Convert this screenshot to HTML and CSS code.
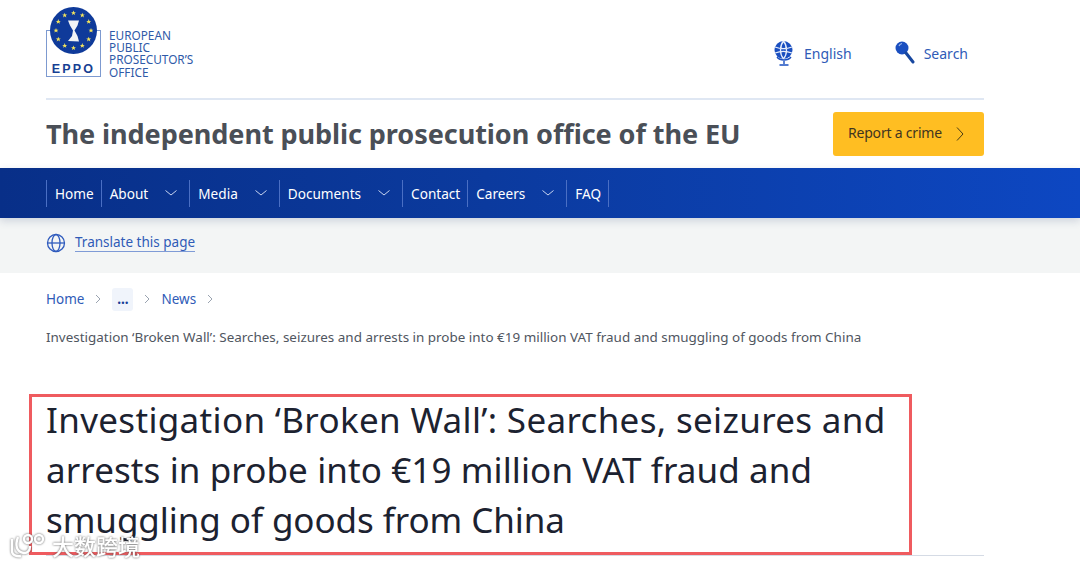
FILE: index.html
```html
<!DOCTYPE html>
<html lang="en">
<head>
<meta charset="utf-8">
<title>EPPO</title>
<link rel="stylesheet" href="styles.css">
</head>
<body>
<div class="container">
  <div class="top-row">
    <div class="logo">
      <svg class="logo-mark" width="56" height="78" viewBox="0 0 56 78">
        <defs><path id="star" d="M0-2.600.7-.8 2.500-.8 1.100.3 1.600 2.100 0 1 -1.600 2.100 -1.100.3 -2.500-.8 -.7-.8z"/></defs>
        <rect x="0.500" y="30.500" width="54" height="46" fill="#fff" stroke="#7d9ad0"/>
        <circle cx="27.500" cy="30.500" r="23.500" fill="#0f3a9a"/>
        <g fill="#f2e35c">
          <use href="#star" x="27.500" y="13"/><use href="#star" x="36.300" y="15.300"/><use href="#star" x="42.700" y="21.700"/>
          <use href="#star" x="45" y="30.500"/><use href="#star" x="42.700" y="39.300"/><use href="#star" x="36.300" y="45.700"/>
          <use href="#star" x="27.500" y="48"/><use href="#star" x="18.700" y="45.700"/><use href="#star" x="12.300" y="39.300"/>
          <use href="#star" x="10" y="30.500"/><use href="#star" x="12.300" y="21.700"/><use href="#star" x="18.700" y="15.300"/>
        </g>
        <path d="M22 20.500h11l-1.500 5-3 5 3 5.500 1.500 5.500-11-.5 4-5 1-5.500-3-5z" fill="#f1f3f6"/>
        <text x="27.500" y="73" class="logo-eppo" text-anchor="middle">EPPO</text>
      </svg>
      <div class="logo-text">EUROPEAN<br>PUBLIC<br>PROSECUTOR’S<br>OFFICE</div>
    </div>
    <div class="tools">
      <a class="tool">
        <svg class="tool-globe" width="22" height="26" viewBox="0 0 22 26">
          <circle cx="10.500" cy="10" r="9" fill="#1a4fc0"/>
          <path d="M2 7c5 2 12 2 17 0M2 13c5-2 12-2 17 0M10.500 1c-4 5-4 13 0 18M10.500 1c4 5 4 13 0 18" fill="none" stroke="#e8eefb" stroke-width="1.300"/>
          <path d="M4 17c3 4 11 4 14 0M11 21v3M6.500 25h9" fill="none" stroke="#1a4fc0" stroke-width="1.400"/>
        </svg>
        <span>English</span>
      </a>
      <a class="tool">
        <svg class="tool-search" width="20" height="24" viewBox="0 0 20 24">
          <circle cx="7" cy="7" r="6.500" fill="#1a4fc0"/>
          <path d="M4 5a4 4 0 0 1 3-2.500" fill="none" stroke="#9fb8ea" stroke-width="1.200"/>
          <path d="M11 12l7 9" stroke="#17479f" stroke-width="3" stroke-linecap="round"/>
        </svg>
        <span>Search</span>
      </a>
    </div>
  </div>
  <div class="tag-row">
    <div class="tagline">The independent public prosecution office of the EU</div>
    <a class="report">Report a crime
      <svg width="10" height="16" viewBox="0 0 10 16"><path d="M2 1.500 8 8l-6 6.500" fill="none" stroke="#4a3c14" stroke-width="1"/></svg>
    </a>
  </div>
</div>

<nav class="nav">
  <div class="nav-inner">
    <a class="nav-item">Home</a>
    <a class="nav-item">About<svg class="caret" width="12" height="6" viewBox="0 0 12 6"><path d="M.5.500 6 5l5.500-4.500"/></svg></a>
    <a class="nav-item">Media<svg class="caret" width="12" height="6" viewBox="0 0 12 6"><path d="M.5.500 6 5l5.500-4.500"/></svg></a>
    <a class="nav-item">Documents<svg class="caret" width="12" height="6" viewBox="0 0 12 6"><path d="M.5.500 6 5l5.500-4.500"/></svg></a>
    <a class="nav-item">Contact</a>
    <a class="nav-item">Careers<svg class="caret" width="12" height="6" viewBox="0 0 12 6"><path d="M.5.500 6 5l5.500-4.500"/></svg></a>
    <a class="nav-item">FAQ</a>
  </div>
</nav>

<div class="translate">
  <svg width="20" height="20" viewBox="0 0 20 20" fill="none" stroke="#2f5bbd" stroke-width="1.300">
    <circle cx="10" cy="10" r="8.500"/><ellipse cx="10" cy="10" rx="4" ry="8.500"/><path d="M1.500 10h17"/>
  </svg>
  <a class="translate-link">Translate this page</a>
</div>

<div class="container">
  <div class="crumbs">
    <a>Home</a>
    <svg class="crumb-sep" width="6" height="10" viewBox="0 0 6 10"><path d="M1 1l4 4-4 4"/></svg>
    <span class="crumb-more">...</span>
    <svg class="crumb-sep" width="6" height="10" viewBox="0 0 6 10"><path d="M1 1l4 4-4 4"/></svg>
    <a>News</a>
    <svg class="crumb-sep" width="6" height="10" viewBox="0 0 6 10"><path d="M1 1l4 4-4 4"/></svg>
  </div>
  <div class="crumb-current">Investigation ‘Broken Wall’: Searches, seizures and arrests in probe into €19 million VAT fraud and smuggling of goods from China</div>
  <div class="title-wrap">
    <h1 class="title"><span class="title-line line-a">Investigation ‘Broken Wall’: Searches, seizures and</span> <span class="title-line line-b">arrests in probe into €19 million VAT fraud and</span> <span class="title-line line-c">smuggling of goods from China</span></h1>
  </div>
</div>
<div class="highlight"></div>
<div class="watermark">
  <svg width="40" height="28" viewBox="0 0 40 28" fill="none" stroke="#fff" stroke-width="2.400">
    <path d="M4 8v12c0 4 5 6 9 5M10 6c-3 8-2 15 6 16 4 0 6-3 6-7"/>
    <circle cx="20" cy="8" r="4"/><circle cx="31" cy="8" r="4"/>
  </svg>
  <span>大数跨境</span>
</div>
</body>
</html>
```
FILE: styles.css
```css
* { box-sizing: border-box; }
html, body { margin: 0; padding: 0; }
body {
  position: relative;
  height: 566px;
  overflow: hidden;
  background: #fff;
  font-family: "Noto Sans", "Open Sans", sans-serif;
  color: #1f2633;
}
.container { width: 938px; margin-left: 46px; }
.top-row {
  height: 100px;
  display: flex;
  align-items: flex-start;
  justify-content: space-between;
  border-bottom: 2px solid #dfe7f3;
}
.logo { display: flex; align-items: flex-end; }
.logo-mark { display: block; }
.logo-eppo { font: 700 12.500px "Liberation Sans", sans-serif; letter-spacing: 2.200px; fill: #163f93; }
.logo-text {
  margin-left: 7px;
  font-size: 11.800px;
  line-height: 12.300px;
  color: #2f5aa8;
}
.tools { display: flex; gap: 43px; margin-top: 40px; margin-right: 16px; }
.tool { display: flex; align-items: center; gap: 9px; font-size: 14px; color: #2f5bb7; height: 26px; }
.tag-row {
  height: 68px;
  display: flex;
  align-items: center;
  justify-content: space-between;
}
.tagline { font-size: 27.100px; font-weight: 700; color: #4a4f57; letter-spacing: -0.1px; padding-bottom: 2px; }
.report {
  width: 151px;
  height: 44px;
  display: flex;
  align-items: center;
  gap: 13px;
  padding: 0 0 3px 15px;
  background: #ffbe22;
  border-radius: 3px;
  font-size: 14px;
  letter-spacing: -0.2px;
  color: #3f3520;
}
.report svg { margin-top: 3px; }
.nav {
  height: 50px;
  background: linear-gradient(90deg, #082f88 0%, #0b3a9e 45%, #0d47c2 100%);
  box-shadow: 0 3px 8px rgba(40, 60, 110, 0.18);
  position: relative;
  display: flex;
  align-items: center;
  padding-left: 46px;
}
.nav-inner { display: flex; }
.nav-item {
  display: flex;
  align-items: center;
  height: 27px;
  padding: 0 7px 0 8px;
  border-left: 1px solid #4a6fc4;
  color: #fff;
  font-size: 13.600px;
  white-space: nowrap;
}
.nav-item:last-child { border-right: 1px solid #4a6fc4; }
.caret { margin-left: 17px; margin-right: 5px; fill: none; stroke: #c8d5f0; stroke-width: 1; }
.translate {
  height: 55px;
  background: #f3f5f5;
  display: flex;
  align-items: center;
  gap: 9px;
  padding: 0 0 5px 46px;
}
.translate-link {
  font-size: 13.500px;
  line-height: 17px;
  color: #2f5bb7;
  border-bottom: 1px solid #7f9bd6;
}
.crumbs {
  height: 24px;
  margin-top: 14px;
  display: flex;
  align-items: center;
  font-size: 13.500px;
  color: #2f5bb7;
}
.crumb-sep { margin: 0 11px; fill: none; stroke: #9aa3b0; stroke-width: 1; }
.crumb-more {
  width: 21px;
  height: 23px;
  display: flex;
  justify-content: center;
  align-items: center;
  background: #f0f4fb;
  border-radius: 3px;
  font-weight: 700;
  color: #173f97;
}
.crumb-current {
  margin-top: 16px;
  font-size: 13.440px;
  line-height: 20px;
  color: #50565f;
  white-space: nowrap;
}
.title-wrap { margin-top: 48px; border-bottom: 1px solid #d5dbe5; padding-bottom: 10px; }
.title {
  margin: 0;
  font-size: 35px;
  font-weight: 400;
  line-height: 50px;
  color: #1c2230;
}
.title-line { display: block; white-space: nowrap; }
.line-a { letter-spacing: 0.33px; }
.line-b { letter-spacing: 0.1px; }
.line-c { letter-spacing: -0.07px; }
.highlight {
  position: absolute;
  left: 29px;
  top: 394px;
  width: 883px;
  height: 161px;
  border: 3px solid #ef5b5f;
  pointer-events: none;
}
.watermark {
  position: absolute;
  left: 8px;
  top: 531px;
  display: flex;
  align-items: center;
  gap: 4px;
  filter: drop-shadow(0 0 1px rgba(80, 80, 80, 0.9));
}
.watermark span {
  font-family: "Noto Sans CJK SC", sans-serif;
  font-size: 22px;
  font-weight: 500;
  color: #fff;
  line-height: 28px;
}
```
